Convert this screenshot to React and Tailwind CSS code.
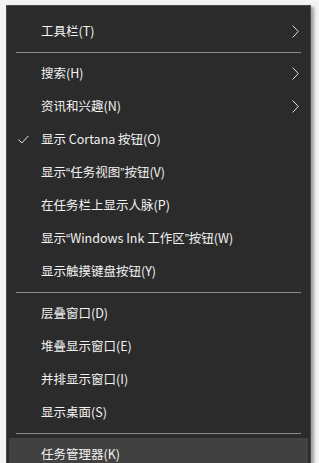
const Check = () => (
    <svg className="w-[11px] h-[9px]" viewBox="0 0 11 9" fill="none" stroke="#e8e8e8" strokeWidth="1">
        <path d="M0.5 4.5 L3.8 8 L10.5 0.8" />
    </svg>
);

const Chevron = () => (
    <svg className="w-[7px] h-[13px]" viewBox="0 0 7 13" fill="none" stroke="#e0e0e0" strokeWidth="1">
        <path d="M0.6 0.5 L6.3 6.5 L0.6 12.5" />
    </svg>
);

const sections = [
    [{ label: '工具栏(T)', sub: true }],
    [
        { label: '搜索(H)', sub: true },
        { label: '资讯和兴趣(N)', sub: true },
        { label: '显示 Cortana 按钮(O)', checked: true },
        { label: '显示“任务视图”按钮(V)' },
        { label: '在任务栏上显示人脉(P)' },
        { label: '显示“Windows Ink 工作区”按钮(W)' },
        { label: '显示触摸键盘按钮(Y)' },
    ],
    [
        { label: '层叠窗口(D)' },
        { label: '堆叠显示窗口(E)' },
        { label: '并排显示窗口(I)' },
        { label: '显示桌面(S)' },
    ],
    [{ label: '任务管理器(K)', active: true }],
];

// curly quotes render narrow (Latin font) like the Windows menu does
const Label = ({ text }) =>
    text.split(/([“”])/).map((part, i) =>
        part === '“' || part === '”' ? (
            <span key={i} className="font-['Liberation_Sans']">{part}</span>
        ) : (
            <span key={i}>{part}</span>
        )
    );

const MenuItem = ({ item }) => (
    <div className={`relative flex items-center h-[33px] pl-[32px] pr-[9px] ${item.active ? 'bg-[#414141]' : ''}`}>
        {item.checked && (
            <span className="absolute left-[9px] top-[12px] flex">
                <Check />
            </span>
        )}
        <span className="flex-1 text-[12.5px] text-[#f2f2f2] leading-none whitespace-nowrap">
            <Label text={item.label} />
        </span>
        {item.sub && <Chevron />}
    </div>
);

const App = () => {
    return (
        <div
            className="w-[319px] h-[463px] overflow-hidden bg-[#f4f4f4] pl-[6px] pt-[5px]"
            style={{ fontFamily: '"Noto Sans CJK SC", "Noto Sans", sans-serif' }}
        >
            <div className="w-[305px] h-[480px] bg-[#2b2b2b] border border-[#4a4a4a] shadow-[3px_2px_3px_rgba(0,0,0,0.35)] pt-[9px] px-[2px]">
                {sections.map((section, i) => (
                    <div key={i}>
                        {i > 0 && (
                            <div className="h-[9px] pt-[4px] px-[7px]">
                                <div className="h-px bg-[#8a8a8a]" />
                            </div>
                        )}
                        {section.map(item => (
                            <MenuItem key={item.label} item={item} />
                        ))}
                    </div>
                ))}
            </div>
        </div>
    );
};

export default App;
